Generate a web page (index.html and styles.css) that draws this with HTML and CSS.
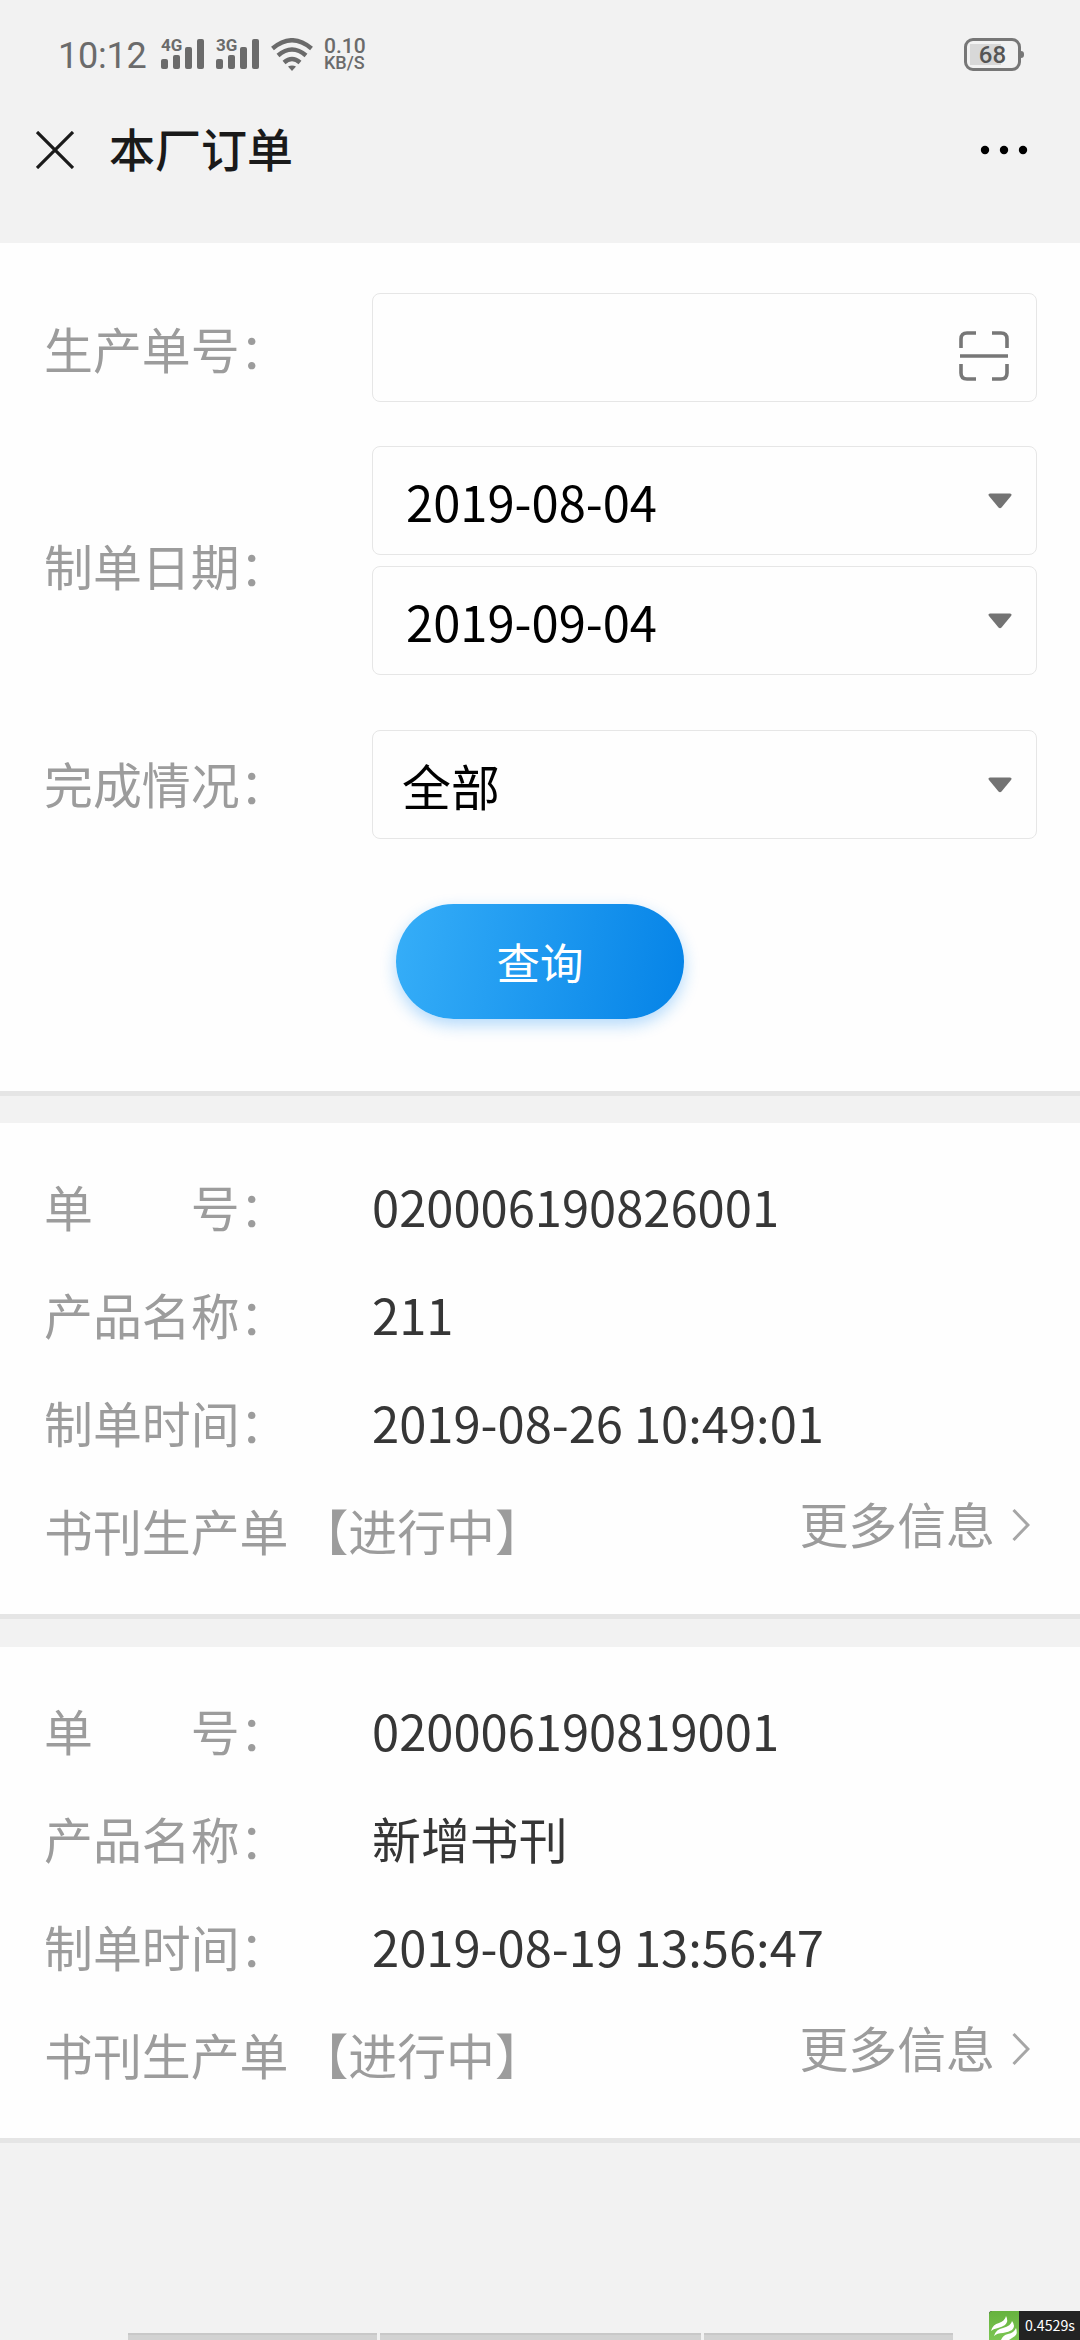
FILE: index.html
```html
<!DOCTYPE html>
<html lang="zh-CN">
<head>
<meta charset="utf-8">
<title>本厂订单</title>
<link rel="stylesheet" href="styles.css">
</head>
<body>
<div class="screen">
  <header class="top">
    <div class="status">
      <span class="clock">10:12</span>
      <span class="signal"><b class="net">4G</b><svg width="43" height="30" fill="#6b6b6b"><rect y="20" width="7" height="10" rx="2"/><rect x="12" y="16" width="7" height="14" rx="2"/><rect x="24" y="8" width="7" height="22" rx="2"/><rect x="36" width="7" height="30" rx="2"/></svg></span>
      <span class="signal"><b class="net">3G</b><svg width="43" height="30" fill="#6b6b6b"><rect y="20" width="7" height="10" rx="2"/><rect x="12" y="16" width="7" height="14" rx="2"/><rect x="24" y="8" width="7" height="22" rx="2"/><rect x="36" width="7" height="30" rx="2"/></svg></span>
      <svg class="wifi" width="42" height="34" viewBox="0 0 42 34" fill="none" stroke="#6b6b6b" stroke-width="4.4"><path d="M1.500 10.500Q21-6 40.500 10.500M7 17.500Q21 5.500 35 17.500M13 24.500Q21 17.500 29 24.500"/><path d="M17 28.500Q21 26.500 25 28.500L21 33Z" fill="#6b6b6b" stroke="none"/></svg>
      <span class="speed"><span class="rate">0.10</span><span class="unit">KB/S</span></span>
      <span class="battery"><span class="level">68</span></span>
    </div>
    <div class="nav">
      <svg width="38" height="38" stroke="#1a1a1a" stroke-width="3.200"><path d="M1 1L37 37M37 1L1 37"/></svg>
      <h1 class="title">本厂订单</h1>
      <svg class="more" width="48" height="10"><circle cx="5" cy="5" r="4.200"/><circle cx="24" cy="5" r="4.200"/><circle cx="43" cy="5" r="4.200"/></svg>
    </div>
  </header>

  <section class="panel form">
    <div class="field">
      <span class="label">生产单号：</span>
      <div class="box scan"><svg width="50" height="50" fill="none" stroke="#777" stroke-width="3.600"><path d="M2 17V8Q2 2 8 2H17M33 2H42Q48 2 48 8V17M2 33V42Q2 48 8 48H17M33 48H42Q48 48 48 42V33M1 25H49"/></svg></div>
    </div>
    <div class="field range">
      <span class="label">制单日期：</span>
      <div class="stack">
        <div class="box date">2019-08-04<svg class="caret" width="24" height="16"><path d="M2 .5H22Q24.500 1 23 3L13.500 14.500Q12 16 10.500 14.500L1 3Q-.5 1 2 .5Z"/></svg></div>
        <div class="box date">2019-09-04<svg class="caret" width="24" height="16"><path d="M2 .5H22Q24.500 1 23 3L13.500 14.500Q12 16 10.500 14.500L1 3Q-.5 1 2 .5Z"/></svg></div>
      </div>
    </div>
    <div class="field state">
      <span class="label">完成情况：</span>
      <div class="box select">全部<svg class="caret" width="24" height="16"><path d="M2 .5H22Q24.500 1 23 3L13.500 14.500Q12 16 10.500 14.500L1 3Q-.5 1 2 .5Z"/></svg></div>
    </div>
    <button class="query">查询</button>
  </section>

  <section class="panel card">
    <div class="row"><span class="label spread"><i>单</i><i>号：</i></span><span class="value">020006190826001</span></div>
    <div class="row"><span class="label">产品名称：</span><span class="value">211</span></div>
    <div class="row"><span class="label">制单时间：</span><span class="value">2019-08-26 10:49:01</span></div>
    <div class="row"><span class="kind">书刊生产单 【进行中】</span><a class="link">更多信息<svg width="18" height="34" fill="none" stroke="#a6a6a6" stroke-width="3"><path d="M1.500 2L16 17L1.500 32"/></svg></a></div>
  </section>

  <section class="panel card">
    <div class="row"><span class="label spread"><i>单</i><i>号：</i></span><span class="value">020006190819001</span></div>
    <div class="row"><span class="label">产品名称：</span><span class="value">新增书刊</span></div>
    <div class="row"><span class="label">制单时间：</span><span class="value">2019-08-19 13:56:47</span></div>
    <div class="row"><span class="kind">书刊生产单 【进行中】</span><a class="link">更多信息<svg width="18" height="34" fill="none" stroke="#a6a6a6" stroke-width="3"><path d="M1.500 2L16 17L1.500 32"/></svg></a></div>
  </section>

  <footer class="foot">
    <div class="tabs"><span></span><span></span><span></span></div>
    <div class="trace">
      <svg width="30" height="29" viewBox="0 0 30 29"><defs><linearGradient id="leaf" x2="0" y2="1"><stop stop-color="#66b23e"/><stop offset="1" stop-color="#7cc653"/></linearGradient></defs><path d="M0 29V3Q0 0 3 0H30V29Z" fill="url(#leaf)"/><path d="M2 20Q4 13 10 12Q16 10 17 5Q20 10 16 14Q13 16 9 17Q4 18 2 20ZM5 25Q7 18 14 17Q22 15 23 10Q27 15 23 19Q20 21 14 22Q8 22 5 25ZM12 29Q14 24 19 23Q25 22 27 17Q29 22 26 25Q23 27 20 29Z" fill="#fff"/></svg>
      <span class="cost">0.4529s</span>
    </div>
  </footer>
</div>
</body>
</html>
```
FILE: styles.css
```css
* { box-sizing: border-box; }
body { margin: 0; background: #f2f2f2; font-family: "Noto Sans CJK SC", sans-serif; font-size: 48.9px; }
svg { display: block; flex: none; }
.screen { height: 2340px; display: flex; flex-direction: column; overflow: hidden; }

.top { height: 243px; flex: none; padding-top: 34px; font-family: Roboto, sans-serif; color: #6b6b6b; }
.status { height: 40px; padding: 0 59px 0 58px; display: flex; align-items: center; }
.clock { width: 103px; font-size: 36px; line-height: 40px; padding-top: 3px; letter-spacing: -.2px; }
.signal { position: relative; width: 55px; }
.net { position: absolute; left: 0; top: 0; font-size: 17px; line-height: 12px; }
.wifi { margin-top: 1px; }
.speed { display: flex; flex-direction: column; margin-left: 11px; font-weight: 500; }
.rate { font-size: 21px; line-height: 17px; }
.unit { font-size: 18px; line-height: 16px; }
.battery { position: relative; margin-left: auto; width: 57px; height: 33px; border: 3px solid #777; border-radius: 9px; padding: 3px; }
.battery::after { content: ""; position: absolute; right: -6px; top: 10px; width: 3px; height: 7px; border-radius: 0 3px 3px 0; background: #777; }
.level { display: block; height: 21px; line-height: 22px; font-size: 24px; font-weight: 500; color: #555; text-align: center; background: linear-gradient(90deg, #d8d8d8 68%, transparent 68%); }
.nav { height: 60px; margin-top: 46px; padding: 0 52px 0 36px; display: flex; align-items: center; }
.title { margin: 0 0 0 35px; padding-bottom: 6px; font: 500 46px/60px "Noto Sans CJK SC", sans-serif; color: #1a1a1a; }
.more { margin-left: auto; }

.panel { flex: none; background: #fefefe; border-bottom: 5px solid #e5e5e5; padding-left: 44px; }
.form { height: 853px; padding-top: 50px; padding-right: 43px; }
.field { display: flex; align-items: center; }
.label { width: 328px; flex: none; color: #9c9c9c; line-height: 72px; }
.range { margin-top: 44px; }
.range .label { padding-top: 9px; }
.state { margin-top: 55px; }
.state .label { padding-bottom: 4px; }
.stack { flex: 1; display: flex; flex-direction: column; gap: 11px; }
.box { flex: 1 0 auto; height: 109px; border: 1px solid #e6e6e6; border-radius: 8px; color: #000; line-height: 107px; display: flex; align-items: center; justify-content: space-between; padding: 0 24px 0 33px; }
.stack .box { flex: none; }
.scan { justify-content: flex-end; align-items: flex-start; padding: 37px 27px 0 0; }
.select { padding-left: 29px; line-height: 103px; }
.caret { fill: #737373; }
.query { display: block; width: 288px; height: 115px; margin: 65px 0 0 352px; padding: 0; border: 0; border-radius: 58px; background: linear-gradient(100deg, #36aef8, #0583e7); box-shadow: 0 6px 16px rgba(20, 140, 245, .32); color: #fff; font: 43.5px/113px "Noto Sans CJK SC", sans-serif; }

.card { height: 496px; margin-top: 27px; padding-top: 29px; padding-right: 50px; }
.card + .card { margin-top: 28px; }
.row { height: 108px; display: flex; align-items: center; color: #9c9c9c; line-height: 72px; white-space: pre; }
.value { color: #363636; }
.spread { display: flex; }
.spread i { font-style: normal; width: 146.7px; flex: none; }
.link { display: flex; align-items: center; gap: 17px; margin: -14px 0 0 auto; }
.link svg { margin-top: 4px; }

.foot { flex: 1; display: flex; align-items: flex-end; padding-left: 128px; }
.tabs { width: 825px; height: 7px; display: flex; gap: 3px; }
.tabs span { flex: 0 0 249px; border-top: 2px solid #c8c8c8; background: #d2d2d2; }
.tabs span:nth-child(2) { flex-basis: 321px; }
.trace { display: flex; width: 91px; height: 29px; margin-left: 36px; background: #232323; border-top-left-radius: 3px; overflow: hidden; }
.cost { padding-left: 6px; font-size: 14.200px; line-height: 28px; color: #fff; }
```
